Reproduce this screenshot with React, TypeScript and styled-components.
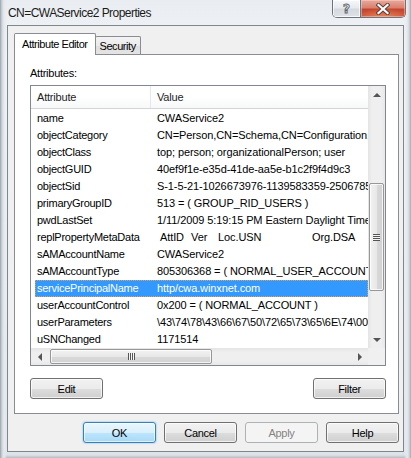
import { FC, ReactNode } from "react";
import styled, { createGlobalStyle } from "styled-components";

const GlobalStyle = createGlobalStyle`
  html, body {
    margin: 0;
    padding: 0;
  }
  body {
    width: 411px;
    height: 458px;
    overflow: hidden;
    font-family: "Liberation Sans", Arial, sans-serif;
    color: #000;
  }
  * {
    box-sizing: border-box;
  }
`;

const Window = styled.div`
  width: 411px;
  height: 458px;
  display: flex;
  flex-direction: column;
  background:
    linear-gradient(90deg, #9aa2aa 0px, #cfd5db 2px, #e6eaee 4px, rgba(230, 234, 238, 0) 7px),
    linear-gradient(270deg, #a2a9b1 0px, #d3d9de 2px, #e6eaee 4px, rgba(230, 234, 238, 0) 7px),
    linear-gradient(0deg, #b4bbc2 0px, #dde2e7 3px, rgba(221, 226, 231, 0) 6px),
    linear-gradient(180deg, #e9edf1 0%, #f2f5f8 12%, #e9eef2 60%, #dfe5ea 100%);
`;

const TitleBar = styled.div`
  height: 27px;
  display: flex;
  align-items: flex-start;
  padding: 0 5px 0 8px;
`;

const Title = styled.span`
  margin-top: 6px;
  font-size: 12px;
  letter-spacing: -0.55px;
  color: #1b1b1b;
`;

const CaptionButtons = styled.div`
  margin-left: auto;
  display: flex;
  height: 18px;
  border: 1px solid #6a737e;
  border-top: none;
  border-radius: 0 0 5px 5px;
  overflow: hidden;
`;

const HelpButton = styled.div`
  width: 28px;
  display: flex;
  align-items: center;
  justify-content: center;
  border-right: 1px solid #6a737e;
  background: linear-gradient(180deg, #f6f8fa 0%, #e7eaee 45%, #d4d9df 55%, #dfe3e8 100%);
  box-shadow: inset 0 0 0 1px rgba(255, 255, 255, 0.7);
  font-family: "DejaVu Sans", sans-serif;
  font-weight: bold;
  font-size: 12px;
  color: #f4f4f4;
  -webkit-text-stroke: 0.9px #5d636a;
`;

const CloseButton = styled.div`
  width: 44px;
  display: flex;
  align-items: center;
  justify-content: center;
  background:
    radial-gradient(ellipse 60% 50% at 50% 100%, rgba(255, 170, 120, 0.55), rgba(255, 170, 120, 0) 100%),
    linear-gradient(180deg, #e8aa9d 0%, #d98170 45%, #c5452d 55%, #cc553c 100%);
  box-shadow: inset 0 0 0 1px rgba(255, 220, 210, 0.45);
`;

const Client = styled.div`
  flex: 1;
  margin: 0 7px 6px 7px;
  border: 1px solid #7e868e;
  background: #f0f0f0;
  display: flex;
  flex-direction: column;
  padding: 7px 4px 0 6px;
`;

const TabStrip = styled.div`
  height: 21px;
  display: flex;
  align-items: flex-end;
  position: relative;
  z-index: 1;
`;

const Tab = styled.div<{ $active?: boolean }>`
  font-size: 11px;
  letter-spacing: -0.45px;
  white-space: nowrap;
  border: 1px solid #898c95;
  border-bottom: none;
  border-radius: 2px 2px 0 0;
  ${(p) =>
    p.$active
      ? `
    height: 22px;
    margin-bottom: -1px;
    padding: 4px 7px 0 7px;
    background: #fff;
  `
      : `
    height: 18px;
    margin-left: -1px;
    padding: 3px 4px 0 4px;
    background: linear-gradient(180deg, #f3f3f3 0%, #ebebeb 50%, #dedede 51%, #e4e4e4 100%);
  `}
`;

const Panel = styled.div`
  flex: 1;
  display: flex;
  flex-direction: column;
  background: #fff;
  border: 1px solid #898c95;
  padding: 12px 12px 14px 15px;
`;

const FieldLabel = styled.div`
  font-size: 11px;
  letter-spacing: -0.25px;
  line-height: 13px;
  margin-bottom: 5px;
`;

const ListBox = styled.div`
  flex: 1;
  min-height: 0;
  border: 1px solid #828790;
  display: grid;
  grid-template-columns: 1fr 17px;
  grid-template-rows: 1fr 17px;
  overflow: hidden;
`;

const Viewport = styled.div`
  overflow: hidden;
  font-size: 11px;
  letter-spacing: -0.2px;
`;

const Header = styled.div`
  height: 23px;
  display: grid;
  grid-template-columns: 120px 1fr;
  border-bottom: 1px solid #d5d5d5;
  background: linear-gradient(180deg, #ffffff 0%, #ffffff 50%, #f7f8f9 100%);
  margin-bottom: 1px;
`;

const HeaderCell = styled.div<{ $divider?: boolean }>`
  padding-left: 6px;
  line-height: 22px;
  color: #1e1e1e;
  border-right: ${(p) => (p.$divider ? "1px solid #e3e8ee" : "none")};
`;

const Row = styled.div<{ $selected?: boolean }>`
  height: 17px;
  margin-left: 4px;
  display: grid;
  grid-template-columns: 116px 1fr;
  line-height: 17px;
  white-space: nowrap;
  overflow: hidden;
  background: ${(p) => (p.$selected ? "#3399ff" : "transparent")};
  color: ${(p) => (p.$selected ? "#fff" : "#000")};
  outline: ${(p) => (p.$selected ? "1px dotted #d9a066" : "none")};
  outline-offset: -1px;
`;

const NameCell = styled.div`
  padding-left: 2px;
  overflow: hidden;
  letter-spacing: -0.25px;
`;

const ValueCell = styled.div`
  padding-left: 6px;
  overflow: hidden;
  display: flex;
  letter-spacing: -0.1px;
`;

const MetaCol = styled.span<{ $w?: number }>`
  display: inline-block;
  width: ${(p) => (p.$w ? `${p.$w}px` : "auto")};
  flex: none;
`;

const VScroll = styled.div`
  display: flex;
  flex-direction: column;
  background: linear-gradient(90deg, #e4e4e4 0%, #efefef 25%, #efefef 75%, #e8e8e8 100%);
`;

const HScroll = styled.div`
  display: flex;
  background: linear-gradient(180deg, #e4e4e4 0%, #efefef 25%, #efefef 75%, #e8e8e8 100%);
`;

const ScrollCorner = styled.div`
  background: #f0f0f0;
`;

const ArrowButton = styled.div`
  width: 17px;
  height: 17px;
  flex: none;
  display: flex;
  align-items: center;
  justify-content: center;
`;

const Arrow = styled.div<{ $dir: "up" | "down" | "left" | "right" }>`
  width: 0;
  height: 0;
  ${(p) =>
    p.$dir === "up"
      ? "border-left: 4px solid transparent; border-right: 4px solid transparent; border-bottom: 4px solid #555;"
      : p.$dir === "down"
      ? "border-left: 4px solid transparent; border-right: 4px solid transparent; border-top: 4px solid #555;"
      : p.$dir === "left"
      ? "border-top: 4px solid transparent; border-bottom: 4px solid transparent; border-right: 4px solid #555;"
      : "border-top: 4px solid transparent; border-bottom: 4px solid transparent; border-left: 4px solid #555;"}
`;

const Track = styled.div<{ $vertical?: boolean }>`
  flex: 1;
  display: flex;
  flex-direction: ${(p) => (p.$vertical ? "column" : "row")};
`;

const Thumb = styled.div<{ $vertical?: boolean }>`
  flex: none;
  display: flex;
  align-items: center;
  justify-content: center;
  border: 1px solid #979797;
  border-radius: 2px;
  box-shadow: inset 0 0 0 1px rgba(255, 255, 255, 0.75);
  background: ${(p) =>
    p.$vertical
      ? "linear-gradient(90deg, #f2f2f2 0%, #e8e8e8 50%, #d9d9d9 51%, #d2d2d2 100%)"
      : "linear-gradient(180deg, #f2f2f2 0%, #e8e8e8 50%, #d9d9d9 51%, #d2d2d2 100%)"};
  ${(p) => (p.$vertical ? "margin: 0 1px; width: 15px;" : "margin: 1px 0; height: 15px;")}
`;

const Grip = styled.div<{ $vertical?: boolean }>`
  width: 7px;
  height: 7px;
  background: ${(p) =>
    p.$vertical
      ? "repeating-linear-gradient(180deg, #555 0px, #555 1px, #f4f4f4 1px, #f4f4f4 2px)"
      : "repeating-linear-gradient(90deg, #555 0px, #555 1px, #f4f4f4 1px, #f4f4f4 2px)"};
`;

const ActionRow = styled.div`
  display: flex;
  justify-content: space-between;
  margin-top: 12px;
`;

const ButtonRow = styled.div`
  display: flex;
  justify-content: flex-end;
  gap: 8px;
  margin: 8px 0 8px 0;
`;

const Button = styled.button<{ $variant?: "default" | "primary" | "disabled" }>`
  width: 73px;
  height: 21px;
  padding: 0;
  font-family: "Liberation Sans", Arial, sans-serif;
  font-size: 11px;
  letter-spacing: -0.3px;
  border-radius: 3px;
  border: 1px solid
    ${(p) => (p.$variant === "primary" ? "#3c7fb1" : p.$variant === "disabled" ? "#adb2b5" : "#707070")};
  color: ${(p) => (p.$variant === "disabled" ? "#838383" : "#000")};
  background: ${(p) =>
    p.$variant === "primary"
      ? "linear-gradient(180deg, #eaf6fd 0%, #d9f0fc 50%, #bee6fd 51%, #a7d9f5 100%)"
      : p.$variant === "disabled"
      ? "#f4f4f4"
      : "linear-gradient(180deg, #f2f2f2 0%, #ebebeb 50%, #dddddd 51%, #cfcfcf 100%)"};
  box-shadow: ${(p) =>
    p.$variant === "disabled"
      ? "none"
      : p.$variant === "primary"
      ? "inset 0 0 0 1px rgba(255, 255, 255, 0.6), 0 0 1px 1px rgba(110, 190, 240, 0.35)"
      : "inset 0 0 0 1px rgba(255, 255, 255, 0.7)"};
`;

type Attr = { name: string; value: ReactNode; selected?: boolean };

const attributes: Attr[] = [
  { name: "name", value: "CWAService2" },
  { name: "objectCategory", value: "CN=Person,CN=Schema,CN=Configuration,DC=winxnet,DC=com" },
  { name: "objectClass", value: "top; person; organizationalPerson; user" },
  { name: "objectGUID", value: "40ef9f1e-e35d-41de-aa5e-b1c2f9f4d9c3" },
  { name: "objectSid", value: "S-1-5-21-1026673976-1139583359-2506785120-1164" },
  { name: "primaryGroupID", value: "513 = ( GROUP_RID_USERS )" },
  { name: "pwdLastSet", value: "1/11/2009 5:19:15 PM Eastern Daylight Time" },
  {
    name: "replPropertyMetaData",
    value: (
      <>
        <MetaCol $w={3} />
        <MetaCol $w={31}>AttID</MetaCol>
        <MetaCol $w={27}>Ver</MetaCol>
        <MetaCol $w={94}>Loc.USN</MetaCol>
        <MetaCol>Org.DSA</MetaCol>
      </>
    ),
  },
  { name: "sAMAccountName", value: "CWAService2" },
  { name: "sAMAccountType", value: "805306368 = ( NORMAL_USER_ACCOUNT )" },
  { name: "servicePrincipalName", value: "http/cwa.winxnet.com", selected: true },
  { name: "userAccountControl", value: "0x200 = ( NORMAL_ACCOUNT )" },
  { name: "userParameters", value: "\\43\\74\\78\\43\\66\\67\\50\\72\\65\\73\\65\\6E\\74\\00" },
  { name: "uSNChanged", value: "1171514" },
];

const CloseGlyph: FC = () => (
  <svg width="14" height="12" viewBox="0 0 14 12">
    <path d="M2.5 2 L11.5 10 M11.5 2 L2.5 10" stroke="#5b3b36" strokeWidth="4" strokeLinecap="square" />
    <path d="M2.5 2 L11.5 10 M11.5 2 L2.5 10" stroke="#ffffff" strokeWidth="2.2" strokeLinecap="square" />
  </svg>
);

const AttributeList: FC = () => (
  <ListBox>
    <Viewport>
      <Header>
        <HeaderCell $divider>Attribute</HeaderCell>
        <HeaderCell>Value</HeaderCell>
      </Header>
      {attributes.map((a) => (
        <Row key={a.name} $selected={a.selected}>
          <NameCell>{a.name}</NameCell>
          <ValueCell>{a.value}</ValueCell>
        </Row>
      ))}
    </Viewport>
    <VScroll>
      <ArrowButton>
        <Arrow $dir="up" />
      </ArrowButton>
      <Track $vertical>
        <Thumb $vertical style={{ marginTop: 80, height: 108 }}>
          <Grip $vertical />
        </Thumb>
      </Track>
      <ArrowButton>
        <Arrow $dir="down" />
      </ArrowButton>
    </VScroll>
    <HScroll>
      <ArrowButton>
        <Arrow $dir="left" />
      </ArrowButton>
      <Track>
        <Thumb style={{ marginLeft: 2, width: 162 }}>
          <Grip />
        </Thumb>
      </Track>
      <ArrowButton>
        <Arrow $dir="right" />
      </ArrowButton>
    </HScroll>
    <ScrollCorner />
  </ListBox>
);

export default function App() {
  return (
    <>
      <GlobalStyle />
      <Window>
        <TitleBar>
          <Title>CN=CWAService2 Properties</Title>
          <CaptionButtons>
            <HelpButton>?</HelpButton>
            <CloseButton>
              <CloseGlyph />
            </CloseButton>
          </CaptionButtons>
        </TitleBar>
        <Client>
          <TabStrip>
            <Tab $active>Attribute Editor</Tab>
            <Tab>Security</Tab>
          </TabStrip>
          <Panel>
            <FieldLabel>Attributes:</FieldLabel>
            <AttributeList />
            <ActionRow>
              <Button>Edit</Button>
              <Button>Filter</Button>
            </ActionRow>
          </Panel>
          <ButtonRow>
            <Button $variant="primary">OK</Button>
            <Button>Cancel</Button>
            <Button $variant="disabled">Apply</Button>
            <Button>Help</Button>
          </ButtonRow>
        </Client>
      </Window>
    </>
  );
}
